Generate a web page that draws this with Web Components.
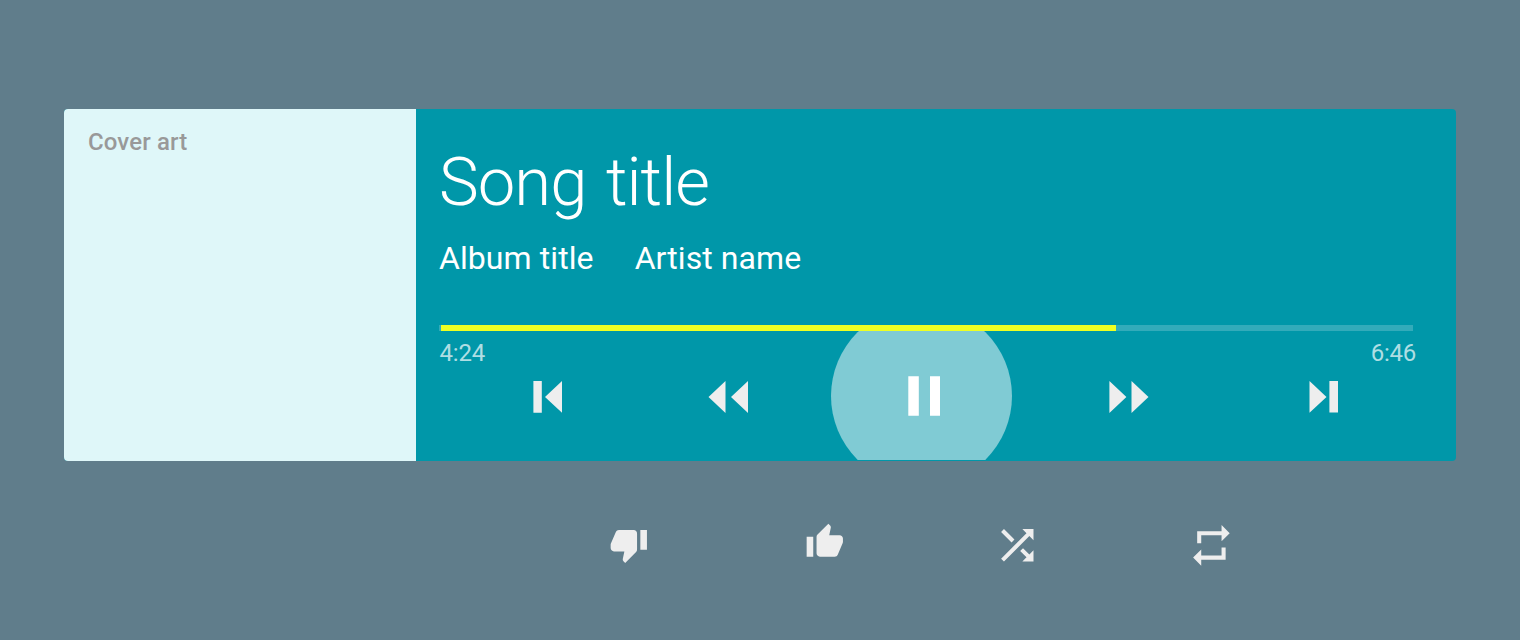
<!DOCTYPE html>
<html lang="en">
<head>
<meta charset="utf-8">
<title>Music player</title>
<style>
  html, body { margin: 0; height: 100%; }
  body { background: #607d8b; font-family: Roboto, "Liberation Sans", sans-serif; overflow: hidden; }
</style>
</head>
<body>
<music-player>
  <cover-art slot="cover">Cover art</cover-art>
  <track-info slot="info">
    <span slot="song">Song title</span>
    <span slot="album">Album title</span>
    <span slot="artist">Artist name</span>
  </track-info>
  <track-progress slot="progress" elapsed="4:24" total="6:46">
    <transport-controls></transport-controls>
  </track-progress>
  <player-actions slot="actions"></player-actions>
</music-player>

<script>
const attach = (el, html) => { el.attachShadow({ mode: 'open' }).innerHTML = html; };

const ICONS = {
  previous: [29, 32, 'M.4 0h8.4v31.7H.4zM29 0v31.8L12 15.9z'],
  rewind: [40, 32, 'M17.5 0v32L.5 16zM40 0v32L23 16z'],
  pause: [33, 40, 'M.3.2h10.5v39.5H.3zM22 .2h10v39.5H22z'],
  forward: [40, 32, 'M.4 0v32l17-16zM22.5 0v32l17-16z'],
  next: [29, 32, 'M.5 0v31.8l17-15.9zM20.4 0H29v31.6h-8.6z'],
  down: [24, 24, 'M15 3H6c-.83 0-1.54.5-1.84 1.22l-3.02 7.05c-.09.23-.14.47-.14.73v1.91l.01.01L1 14c0 1.1.9 2 2 2h6.31l-.95 4.57-.03.32c0 .41.17.79.44 1.06L9.83 23l6.59-6.59c.36-.36.58-.86.58-1.41V5c0-1.1-.9-2-2-2zm4 0v12h4V3h-4z'],
  up: [24, 24, 'M1 21h4V9H1v12zm22-11c0-1.1-.9-2-2-2h-6.31l.95-4.57.03-.32c0-.41-.17-.79-.44-1.06L14.17 1 7.59 7.59C7.22 7.95 7 8.45 7 9v10c0 1.1.9 2 2 2h9c.83 0 1.54-.5 1.84-1.22l3.02-7.05c.09-.23.14-.47.14-.73v-1.91l-.01-.01L23 10z'],
  shuffle: [24, 24, 'M10.59 9.17L5.41 4 4 5.41l5.17 5.17 1.42-1.41zM14.5 4l2.04 2.04L4 18.59 5.41 20 17.96 7.46 20 9.5V4h-5.5zm.33 9.41l-1.41 1.41 3.13 3.13L14.5 20H20v-5.5l-2.04 2.04-3.13-3.13z'],
  repeat: [24, 24, 'M7 7h10v3l4-4-4-4v3H5v6h2V7zm10 10H7v-3l-4 4 4 4v-3h12v-6h-2v4z']
};

customElements.define('player-icon', class extends HTMLElement {
  connectedCallback() {
    if (this.shadowRoot) return;
    const [w, h, d] = ICONS[this.getAttribute('name')];
    const size = this.getAttribute('size') || w;
    attach(this, `<style>:host{display:block;flex:none}svg{display:block;overflow:visible}</style>
      <svg width="${size}" height="${size * h / w}" viewBox="0 0 ${w} ${h}" fill="currentColor" aria-hidden="true"><path d="${d}"/></svg>`);
  }
});

customElements.define('cover-art', class extends HTMLElement {
  constructor() {
    super();
    attach(this, `<style>
      :host{display:block;box-sizing:border-box;width:352px;height:352px;padding:19px 24px;background:#dff7f9;
        color:#999;font-weight:500;font-size:24px;line-height:28px;letter-spacing:.12px}
      </style><slot></slot>`);
  }
});

customElements.define('track-info', class extends HTMLElement {
  constructor() {
    super();
    attach(this, `<style>
      :host{display:block;box-sizing:border-box;height:216px;padding:33px 23px 0;color:#fff}
      .song{font-weight:300;font-size:67px;line-height:80px;letter-spacing:-.95px;word-spacing:4px;white-space:nowrap}
      .meta{display:flex;gap:41px;margin-top:16px;font-size:32px;line-height:40px;letter-spacing:.08px;white-space:nowrap}
      </style>
      <div class="song"><slot name="song"></slot></div>
      <div class="meta"><slot name="album"></slot><slot name="artist"></slot></div>`);
  }
});

customElements.define('track-progress', class extends HTMLElement {
  connectedCallback() {
    if (this.shadowRoot) return;
    attach(this, `<style>
      :host{display:grid;grid-template-rows:6px 129px}
      .bar{margin:0 43px 0 23px;padding-left:2px;background:#33abba}
      .fill{width:675.3px;height:6px;background:#eeff22}
      .times{grid-area:2/1;display:flex;justify-content:space-between;margin:8px 40px 0 23.6px;
        font-size:24px;line-height:28px;height:28px;font-weight:400;letter-spacing:-.25px;color:rgba(255,255,255,.7);z-index:1}
      .controls{grid-area:2/1;overflow:hidden}
      </style>
      <div class="bar"><div class="fill"></div></div>
      <div class="times"><span>${this.getAttribute('elapsed')}</span><span>${this.getAttribute('total')}</span></div>
      <div class="controls"><slot></slot></div>`);
  }
});

customElements.define('transport-controls', class extends HTMLElement {
  constructor() {
    super();
    attach(this, `<style>
      :host{display:grid;grid-template-columns:175px 123px 278px 200px auto;align-items:center;
        height:129px;padding-left:117px;color:#eee}
      player-icon{padding-top:2px}
      .disc{display:flex;align-items:center;justify-content:center;width:181px;height:180px;margin:-26px 0;
        border-radius:50%;background:#80cbd4;color:#fff}
      .disc player-icon{padding:1px 0 0 6px}
      </style>
      <player-icon name="previous"></player-icon>
      <player-icon name="rewind"></player-icon>
      <div class="disc"><player-icon name="pause"></player-icon></div>
      <player-icon name="forward"></player-icon>
      <player-icon name="next"></player-icon>`);
  }
});

customElements.define('player-actions', class extends HTMLElement {
  constructor() {
    super();
    attach(this, `<style>
      :host{display:grid;grid-template-columns:196px 188px 194px auto;align-items:start;
        padding:60px 0 0 545px;color:#eee}
      player-icon[name=down]{margin-top:4px}
      player-icon[name=up]{margin-top:1px}
      </style>
      <player-icon name="down" size="39.6"></player-icon>
      <player-icon name="up" size="39.6"></player-icon>
      <player-icon name="shuffle" size="48.6"></player-icon>
      <player-icon name="repeat" size="48.8"></player-icon>`);
  }
});

customElements.define('music-player', class extends HTMLElement {
  constructor() {
    super();
    attach(this, `<style>
      :host{display:block;padding:109px 64px 0}
      .card{display:flex;height:352px;border-radius:4px;overflow:hidden;background:#0097a9}
      .panel{flex:1;min-width:0}
      </style>
      <div class="card"><slot name="cover"></slot>
        <div class="panel"><slot name="info"></slot><slot name="progress"></slot></div></div>
      <slot name="actions"></slot>`);
  }
});
</script>
</body>
</html>
